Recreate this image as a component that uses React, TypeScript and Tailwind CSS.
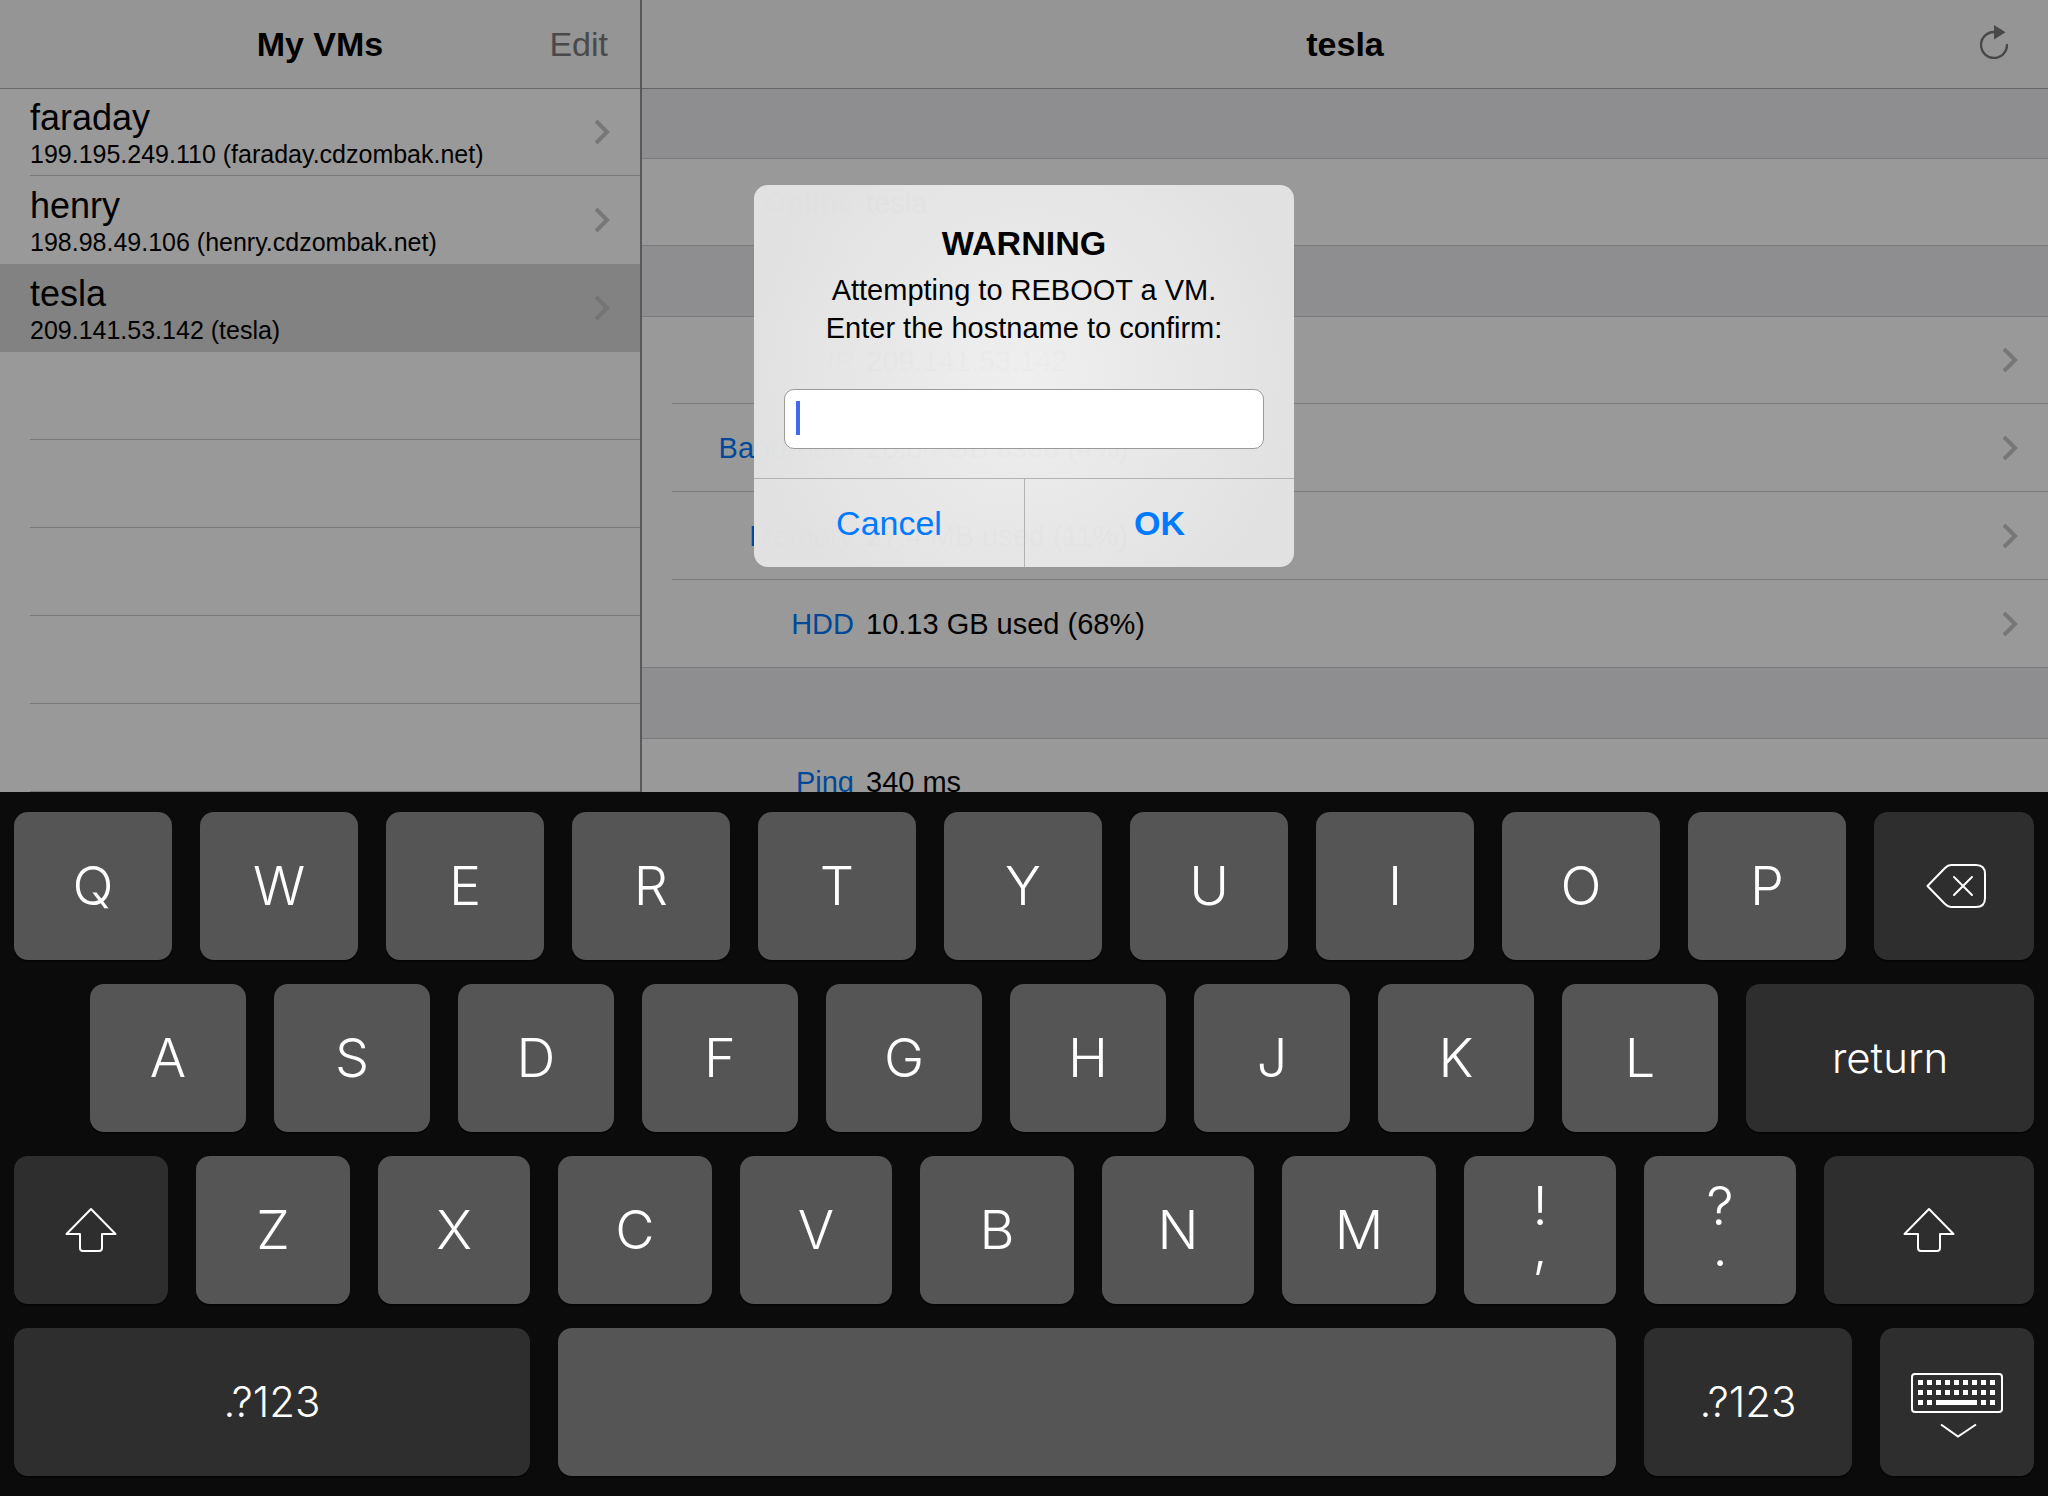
import React from "react";

const vms = [
  { name: "faraday", detail: "199.195.249.110 (faraday.cdzombak.net)", active: false },
  { name: "henry", detail: "198.98.49.106 (henry.cdzombak.net)", active: false },
  { name: "tesla", detail: "209.141.53.142 (tesla)", active: true },
];

const details = [
  { label: "IP", value: "209.141.53.142" },
  { label: "Bandwidth", value: "20.84 GB used (4%)" },
  { label: "Memory", value: "27.4 MB used (11%)" },
  { label: "HDD", value: "10.13 GB used (68%)" },
];

function Chevron({ className }: { className: string }) {
  return (
    <svg className={className} width="18" height="26" viewBox="0 0 18 26" fill="none" stroke="currentColor" strokeWidth="4" aria-hidden="true">
      <path d="M2 2 13 13 2 24" />
    </svg>
  );
}

function ReloadIcon() {
  return (
    <svg width="28" height="34" viewBox="0 0 28 34" aria-hidden="true">
      <path d="M14 7A13 13 0 1 0 27 19" fill="none" stroke="#484848" strokeWidth="2.4" />
      <path d="M14 0 25.5 7.2 14 14.5Z" fill="#484848" />
    </svg>
  );
}

function DeleteIcon() {
  return (
    <svg className="ml-1" width="60" height="46" viewBox="0 0 60 46" fill="none" stroke="white" strokeWidth="2" strokeLinecap="round" strokeLinejoin="round" aria-hidden="true">
      <path d="M1.5 23 19 5Q22 2 25 2H50Q59 2 59 11V35Q59 44 50 44H25Q22 44 19 41Z" />
      <path d="M28 14 46 32M46 14 28 32" />
    </svg>
  );
}

function ShiftIcon() {
  return (
    <svg width="52" height="46" viewBox="0 0 52 46" fill="none" stroke="white" strokeWidth="2" strokeLinejoin="round" aria-hidden="true">
      <path d="M26 2 50.5 27H37V41Q37 44 34 44H18Q15 44 15 41V27H1.5Z" />
    </svg>
  );
}

function HideKeyboardIcon() {
  const cols = [0, 1, 2, 3, 4, 5, 6, 7, 8];
  return (
    <svg className="mt-2" width="92" height="66" viewBox="0 0 92 66" aria-hidden="true">
      <rect x="1" y="1" width="90" height="38" rx="3" fill="none" stroke="white" strokeWidth="2" />
      {cols.map((c) => (
        <g key={c} fill="white">
          <rect x={7 + c * 9} y="7" width="5" height="5" />
          <rect x={7 + c * 9} y="17" width="5" height="5" />
          {(c < 2 || c > 6) && <rect x={7 + c * 9} y="27" width="5" height="5" />}
        </g>
      ))}
      <rect x="25" y="27" width="41" height="5" fill="white" />
      <path d="M30 51.5 47 63.5 65 51.5" fill="none" stroke="white" strokeWidth="2" />
    </svg>
  );
}

function Key({ children, className, dark = false, label }: { children?: React.ReactNode; className: string; dark?: boolean; label?: string }) {
  return (
    <button
      type="button"
      aria-label={label}
      className={`${className} ${dark ? "bg-[#2e2e2e]" : "bg-[#555555]"} flex h-[148px] min-w-0 flex-col items-center justify-center rounded-[14px] text-white shadow-[0_2px_0_#060606]`}
    >
      {children}
    </button>
  );
}

function Keyboard() {
  return (
    <section aria-label="Keyboard" className="flex shrink-0 flex-col gap-6 bg-[#0b0b0b] px-[14px] py-5 font-['Inter',sans-serif] text-[54px] leading-[60px] font-light">
      <div className="flex gap-7">
        {"QWERTYUIOP".split("").map((k) => (
          <Key key={k} className="flex-[158]">{k}</Key>
        ))}
        <Key className="flex-[160]" dark label="Delete"><DeleteIcon /></Key>
      </div>
      <div className="flex gap-7 pl-[76px]">
        {"ASDFGHJKL".split("").map((k) => (
          <Key key={k} className="flex-[156]">{k}</Key>
        ))}
        <Key className="flex-[288]" dark><span className="text-[42px]">return</span></Key>
      </div>
      <div className="flex gap-7">
        <Key className="flex-[154]" dark label="Left shift"><ShiftIcon /></Key>
        {"ZXCVBNM".split("").map((k, i) => (
          <Key key={k} className={i % 2 === 0 ? "flex-[154]" : "flex-[152]"}>{k}</Key>
        ))}
        <Key className="flex-[152]"><span className="leading-[34px]">!</span><span className="leading-[48px]">,</span></Key>
        <Key className="flex-[152]"><span className="leading-[34px]">?</span><span className="leading-[48px]">.</span></Key>
        <Key className="flex-[210]" dark label="Right shift"><ShiftIcon /></Key>
      </div>
      <div className="flex gap-7">
        <Key className="flex-[516]" dark><span className="text-[42px]">.?123</span></Key>
        <Key className="flex-[1058]" label="Space" />
        <Key className="flex-[208]" dark><span className="text-[42px]">.?123</span></Key>
        <Key className="flex-[154]" dark label="Hide keyboard"><HideKeyboardIcon /></Key>
      </div>
    </section>
  );
}

function Sidebar() {
  return (
    <aside className="flex w-[642px] shrink-0 flex-col border-r-2 border-[#59595b] bg-[#999999]">
      <header className="grid h-[89px] shrink-0 grid-cols-3 items-center border-b border-[#6b6b6b] bg-[#959595] text-[34px]">
        <h1 className="col-start-2 text-center font-bold">My VMs</h1>
        <button type="button" className="justify-self-end pr-8 text-[#4a4a4a]">Edit</button>
      </header>
      <ul>
        {vms.map((vm, i) => (
          <li key={vm.name} className={vm.active ? "bg-[#828282]" : ""}>
            <a
              href={`#${vm.name}`}
              className={`ml-[30px] flex items-center justify-between ${i === 0 ? "h-[87px] border-b border-[#7a7a7c]" : "h-[88px]"}`}
            >
              <span className="flex flex-col pt-[2px]">
                <span className="text-[36px] leading-[42px]">{vm.name}</span>
                <span className="text-[25px] leading-[30px]">{vm.detail}</span>
              </span>
              <Chevron className={vm.active ? "mr-[28px] text-[#747476]" : "mr-[28px] text-[#777779]"} />
            </a>
          </li>
        ))}
      </ul>
      {[1, 2, 3, 4, 5].map((n) => (
        <div key={n} className="ml-[30px] h-[88px] shrink-0 border-b border-[#7a7a7c]" />
      ))}
    </aside>
  );
}

function DetailPane() {
  return (
    <main className="flex min-w-0 grow flex-col bg-[#999999] text-[29px]">
      <header className="grid h-[89px] shrink-0 grid-cols-3 items-center border-b border-[#656566] bg-[#959595]">
        <h2 className="col-start-2 text-center text-[34px] font-bold">tesla</h2>
        <button type="button" aria-label="Reload" className="justify-self-end pr-10 pb-1"><ReloadIcon /></button>
      </header>
      <div className="h-[70px] shrink-0 border-b border-[#7a7a7c] bg-[#8e8e91]" />
      <div className="flex h-[87px] shrink-0 items-center gap-3 border-b border-[#7a7a7c] pt-[3px]">
        <span className="w-[212px] text-right font-bold text-[#2c7a2c]">Online</span>
        <span>tesla</span>
      </div>
      <div className="h-[71px] shrink-0 border-b border-[#7a7a7c] bg-[#8e8e91]" />
      {details.map((d, i) => (
        <a
          key={d.label}
          href={`#${d.label}`}
          className={`flex shrink-0 items-center gap-3 border-b border-[#7a7a7c] ${i === 0 ? "h-[87px]" : "h-[88px]"} ${i === 3 ? "pl-[30px]" : "ml-[30px]"}`}
        >
          <span className="w-[182px] pt-[3px] text-right text-[#004999]">{d.label}</span>
          <span className="grow pt-[3px]">{d.value}</span>
          <Chevron className="mr-[28px] text-[#777779]" />
        </a>
      ))}
      <div className="h-[71px] shrink-0 border-b border-[#7a7a7c] bg-[#8e8e91]" />
      <div className="flex h-[88px] shrink-0 items-center gap-3">
        <span className="w-[212px] text-right text-[#004999]">Ping</span>
        <span>340 ms</span>
      </div>
    </main>
  );
}

function RebootDialog() {
  return (
    <div
      role="dialog"
      aria-labelledby="reboot-title"
      className="absolute top-[185px] left-1/2 w-[540px] -translate-x-1/2 overflow-hidden rounded-[14px] bg-[radial-gradient(circle_at_50%_50%,rgba(241,241,241,0.98),rgba(227,227,227,0.98)_270px)] text-center"
    >
      <div className="px-[30px] pt-[38px] pb-[29px]">
        <h2 id="reboot-title" className="text-[34px] leading-[40px] font-bold">WARNING</h2>
        <label htmlFor="hostname" className="mt-2 block text-[29px] leading-[38px]">
          Attempting to REBOOT a VM.
          <br />
          Enter the hostname to confirm:
        </label>
        <div className="relative mt-[42px]">
          <input id="hostname" type="text" className="block h-[60px] w-full rounded-[10px] border border-[#9b9b9b] bg-white px-3 text-[29px] caret-transparent outline-none" />
          <span className="absolute top-3 left-3 h-[34px] w-1 bg-[#4269ee]" />
        </div>
      </div>
      <div className="grid grid-cols-2 border-t border-[#b3b3b4] text-[34px] text-[#007aff]">
        <button type="button" className="h-[88px]">Cancel</button>
        <button type="button" className="h-[88px] border-l border-[#b3b3b4] font-bold">OK</button>
      </div>
    </div>
  );
}

export default function App() {
  return (
    <div className="flex h-screen flex-col bg-[#0b0b0b] font-['Liberation_Sans',Arial,sans-serif] text-black">
      <div className="relative flex min-h-0 grow overflow-hidden">
        <Sidebar />
        <DetailPane />
        <RebootDialog />
      </div>
      <Keyboard />
    </div>
  );
}
